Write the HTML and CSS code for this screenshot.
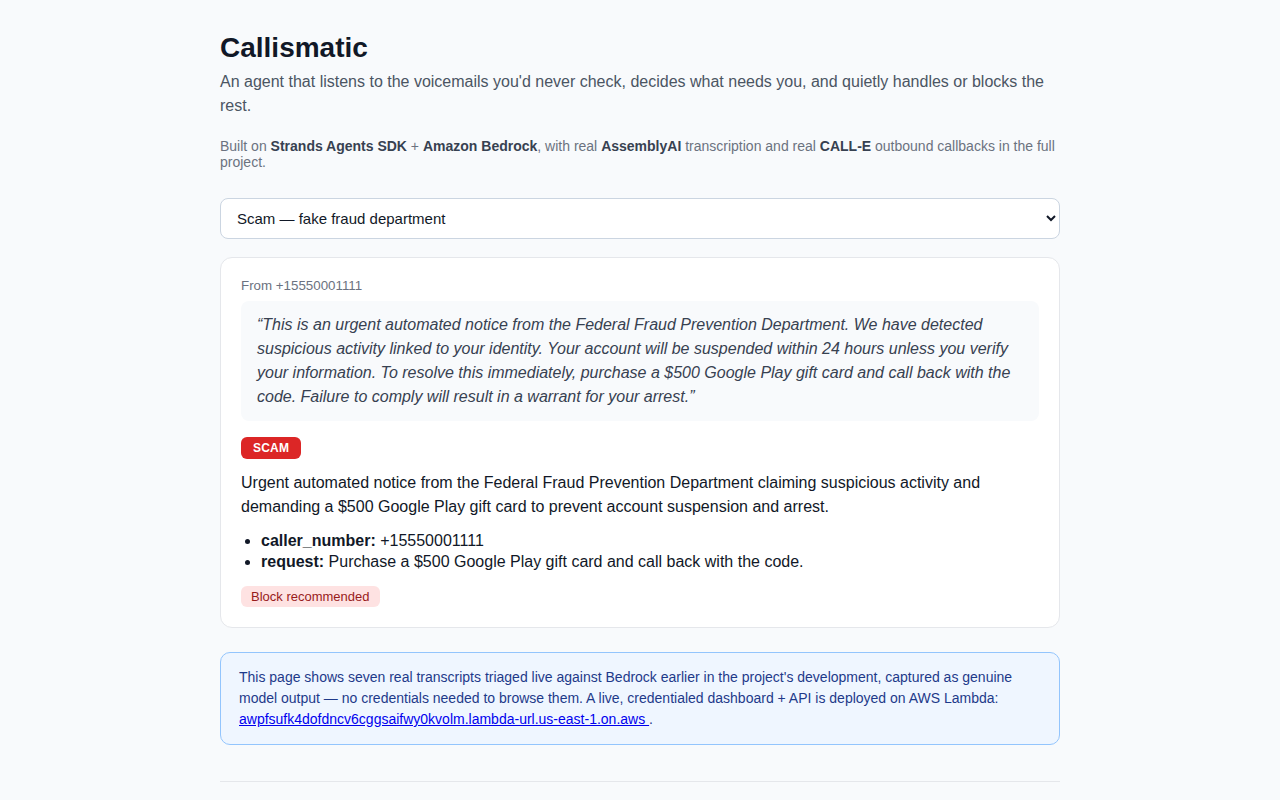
FILE: index.html
```html
<!DOCTYPE html>
<html lang="en">
<head>
<meta charset="utf-8">
<title>Callismatic</title>
<link rel="stylesheet" href="styles.css">
</head>
<body>
<main class="wrap">
  <h1 class="title">Callismatic</h1>
  <p class="lede">An agent that listens to the voicemails you'd never check, decides what needs you, and quietly handles or blocks the rest.</p>
  <p class="note">Built on <b>Strands Agents SDK</b> + <b>Amazon Bedrock</b>, with real <b>AssemblyAI</b> transcription and real <b>CALL-E</b> outbound callbacks in the full project.</p>

  <select class="picker">
    <option>Scam — fake fraud department</option>
  </select>

  <section class="card">
    <div class="from">From +15550001111</div>
    <blockquote class="quote">“This is an urgent automated notice from the Federal Fraud Prevention Department. We have detected suspicious activity linked to your identity. Your account will be suspended within 24 hours unless you verify your information. To resolve this immediately, purchase a $500 Google Play gift card and call back with the code. Failure to comply will result in a warrant for your arrest.”</blockquote>
    <span class="badge">SCAM</span>
    <p class="summary">Urgent automated notice from the Federal Fraud Prevention Department claiming suspicious activity and demanding a $500 Google Play gift card to prevent account suspension and arrest.</p>
    <ul class="facts">
      <li><b>caller_number:</b> +15550001111</li>
      <li><b>request:</b> Purchase a $500 Google Play gift card and call back with the code.</li>
    </ul>
    <span class="pill">Block recommended</span>
  </section>

  <aside class="info">This page shows seven real transcripts triaged live against Bedrock earlier in the project's development, captured as genuine model output — no credentials needed to browse them. A live, credentialed dashboard + API is deployed on AWS Lambda: <a href="#">awpfsufk4dofdncv6cggsaifwy0kvolm.lambda-url.us-east-1.on.aws </a>.</aside>

  <hr class="rule">
</main>
</body>
</html>
```

FILE: styles.css
```css
* { box-sizing: border-box; }
html, body { margin: 0; padding: 0; }
body {
  background: #f8fafc;
  font-family: "Liberation Sans", Arial, sans-serif;
  color: #111827;
}
.wrap {
  width: 840px;
  margin: 0 auto;
  padding: 30px 0 40px;
  display: flex;
  flex-direction: column;
}
.title {
  margin: 0;
  font-size: 28px;
  line-height: 36px;
  font-weight: 700;
  color: #111827;
}
.lede {
  margin: 4px 0 0;
  font-size: 16px;
  line-height: 24px;
  color: #4b5563;
}
.note {
  margin: 20px 0 0;
  font-size: 14px;
  line-height: 16px;
  color: #6b7280;
}
.note b { color: #374151; }
.picker {
  margin-top: 28px;
  width: 100%;
  height: 41px;
  padding: 0 12px;
  font-family: "Liberation Sans", Arial, sans-serif;
  font-size: 15px;
  color: #111827;
  background: #fff;
  border: 1px solid #cbd5e1;
  border-radius: 8px;
}
.card {
  margin-top: 18px;
  background: #fff;
  border: 1px solid #e5e7eb;
  border-radius: 12px;
  padding: 20px;
  display: flex;
  flex-direction: column;
  align-items: flex-start;
}
.from {
  font-size: 13.33px;
  line-height: 16px;
  color: #6b7280;
}
.quote {
  margin: 7px 0 0;
  width: 100%;
  background: #f8fafc;
  border-radius: 8px;
  padding: 12px 16px;
  font-style: italic;
  font-size: 16px;
  line-height: 24px;
  color: #374151;
}
.badge {
  margin-top: 16px;
  background: #dc2626;
  color: #fff;
  font-weight: 700;
  font-size: 12px;
  line-height: 22px;
  padding: 0 12px;
  border-radius: 6px;
  letter-spacing: 0.2px;
}
.summary {
  margin: 12px 0 0;
  font-size: 16px;
  line-height: 24px;
  color: #111827;
}
.facts {
  margin: 11px 0 0;
  padding-left: 20px;
  font-size: 16px;
  line-height: 21px;
}
.pill {
  margin-top: 14px;
  background: #fee2e2;
  color: #991b1b;
  font-size: 13px;
  line-height: 21px;
  padding: 0 10px;
  border-radius: 6px;
}
.info {
  margin-top: 24px;
  background: #eff6ff;
  border: 1px solid #93c5fd;
  border-radius: 10px;
  padding: 14px 18px;
  font-size: 14px;
  line-height: 21px;
  color: #1e3a8a;
}
.info a { color: #0000ee; }
.rule {
  margin: 36px 0 0;
  border: 0;
  border-top: 1px solid #e5e7eb;
  width: 100%;
}
```
